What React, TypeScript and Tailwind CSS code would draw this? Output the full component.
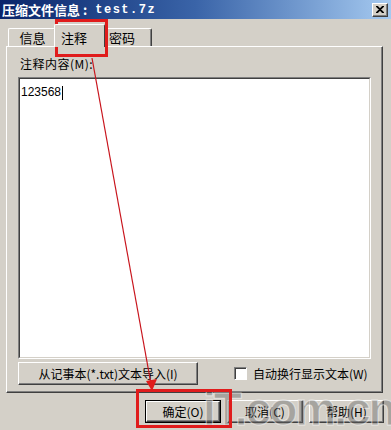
import React from "react";

const cjk = { fontFamily: '"SimSun","Noto Sans CJK SC","Liberation Sans",sans-serif' };

function Btn({ children, w, def }: { children: React.ReactNode; w: string; def?: boolean }) {
  return (
    <div
      className={`${w} h-[23px] flex items-center justify-center text-[12px] text-black bg-[#d4d0c8] border ${
        def ? "border-black" : "border-t-white border-l-white border-r-[#404040] border-b-[#404040]"
      }`}
    >
      <div
        className={`w-full h-full flex items-center justify-center ${
          def
            ? "border border-t-white border-l-white border-r-[#404040] border-b-[#404040] shadow-[inset_-1px_-1px_0_#808080]"
            : "shadow-[inset_-1px_-1px_0_#808080]"
        }`}
      >
        {children}
      </div>
    </div>
  );
}

export default function App() {
  return (
    <div className="relative w-[391px] h-[430px] bg-[#d4d0c8] overflow-hidden text-[12px] text-black" style={cjk}>
      {/* title bar */}
      <div className="h-[19px] flex items-center justify-between pl-[2px] pr-[3px] bg-gradient-to-r from-[#0a246a] via-[#3a64a8] to-[#a6caf0]">
        <div className="flex items-center text-white font-bold leading-none">
          <span className="text-[13px]">压缩文件信息</span>
          <span className="text-[13px] ml-[3px]">:</span>
          <span
            className="ml-[8px] text-[12px] tracking-[1.5px]"
            style={{ fontFamily: '"Liberation Mono",monospace' }}
          >
            test.7z
          </span>
        </div>
        <div className="w-[16px] h-[14px] bg-[#d4d0c8] border border-t-white border-l-white border-r-[#404040] border-b-[#404040] shadow-[inset_-1px_-1px_0_#808080] flex items-center justify-center">
          <svg width="8" height="7" viewBox="0 0 8 7">
            <path d="M0 0L7 7M7 0L0 7M1 0L8 7M8 0L1 7" stroke="#000" strokeWidth="1.2" />
          </svg>
        </div>
      </div>

      {/* tabs */}
      <div className="pt-[5px] px-[6px]">
        <div className="flex items-end h-[22px]">
          <div className="ml-[2px] w-[47px] h-[18px] border-t border-l border-white border-r border-r-[#404040] rounded-t-[2px] flex items-center justify-center pl-[2px] text-[13px]">
            信息
          </div>
          <div className="relative z-10 -ml-[1px] w-[51px] h-[23px] -mb-[1px] bg-[#d4d0c8] border-t border-l border-white border-r border-r-[#404040] rounded-t-[2px] flex items-start pt-[3px] pl-[6px] text-[13px]">
            注释
          </div>
          <div className="w-[47px] h-[18px] border-t border-white border-r border-r-[#404040] shadow-[inset_-1px_0_0_#808080] rounded-t-[2px] flex items-center pl-[4px] text-[13px]">
            密码
          </div>
        </div>

        {/* panel */}
        <div className="w-[377px] h-[347px] border border-t-white border-l-white border-r-[#404040] border-b-[#404040] shadow-[inset_-1px_-1px_0_#808080] flex flex-col pl-[11px] pt-[9px]">
          <div className="pl-[2px] h-[16px] leading-[16px] text-[12px] tracking-[0.5px]">注释内容(M):</div>
          <div className="mt-[5px] w-[353px] h-[282px] bg-white border border-t-[#808080] border-l-[#808080] border-r-white border-b-white">
            <div className="w-full h-full border border-t-[#404040] border-l-[#404040] border-r-[#d4d0c8] border-b-[#d4d0c8] pl-[1px] pt-[3px]">
              <span className="text-[12px]" style={{ fontFamily: '"Liberation Sans",sans-serif' }}>123568</span>
              <span className="inline-block w-[1px] h-[14px] bg-black align-middle ml-[1px]" />
            </div>
          </div>
          <div className="mt-[3px] flex items-center">
            <Btn w="w-[180px]">从记事本(*.txt)文本导入(I)</Btn>
            <div className="ml-[36px] flex items-center">
              <div className="w-[13px] h-[13px] bg-white border border-t-[#808080] border-l-[#808080] border-r-white border-b-white shadow-[inset_1px_1px_0_#404040]" />
              <span className="ml-[6px] text-[12px]">自动换行显示文本(W)</span>
            </div>
          </div>
        </div>

        {/* bottom buttons */}
        <div className="mt-[7px] flex justify-end gap-[6px] pr-[1px]">
          <Btn w="w-[76px]" def>确定(O)</Btn>
          <Btn w="w-[76px]">取消(C)</Btn>
          <Btn w="w-[75px]">帮助(H)</Btn>
        </div>
      </div>

      {/* watermark */}
      <div
        className="absolute left-[203px] top-[386px] text-[46px] font-bold leading-none tracking-[-2px] text-[rgba(100,100,100,0.42)] pointer-events-none whitespace-nowrap"
        style={{ fontFamily: '"Liberation Sans",sans-serif', WebkitTextStroke: "1px rgba(255,255,255,0.55)" }}
      >
        iT.com.cn
      </div>

      {/* red annotations */}
      <div className="absolute left-[55px] top-[19px] w-[53px] h-[38px] border-[3px] border-[#e01c1c]" />
      <div className="absolute left-[136px] top-[389px] w-[96px] h-[39px] border-[3px] border-[#e01c1c]" />
      <svg className="absolute left-0 top-0 pointer-events-none" width="391" height="430">
        <line x1="92" y1="58" x2="151" y2="384" stroke="#c8141c" strokeWidth="1.2" />
        <path d="M146 381 L157 379 L152 391 Z" fill="#e01c1c" />
      </svg>
    </div>
  );
}
